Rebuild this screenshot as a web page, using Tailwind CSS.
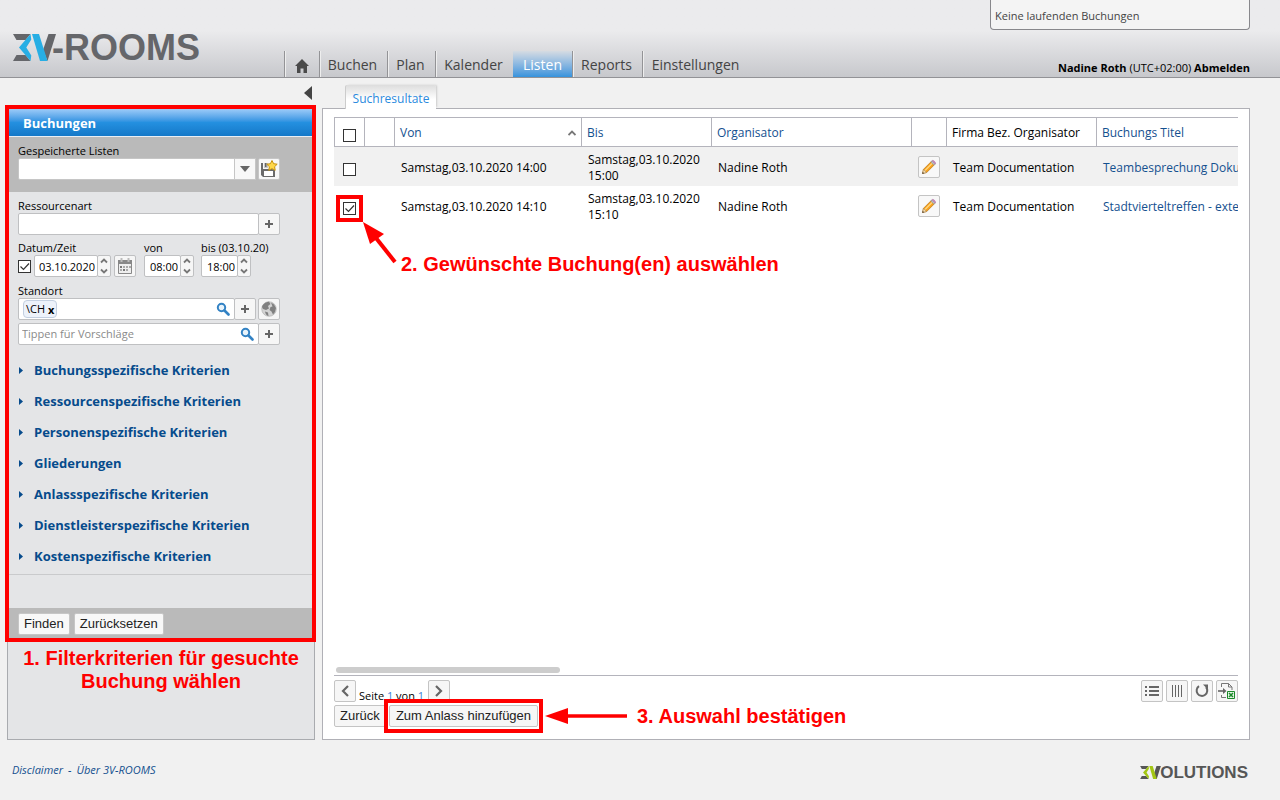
<!DOCTYPE html>
<html lang="de">
<head>
<meta charset="utf-8">
<meta name="viewport" content="width=device-width, initial-scale=1">
<title>3V-ROOMS – Listen</title>
<script src="https://cdn.jsdelivr.net/npm/@tailwindcss/browser@4"></script>
</head>
<body class="flex min-h-screen flex-col bg-[#f1f1f1] font-['Open_Sans','Noto_Sans',sans-serif] text-xs text-black">

<svg class="hidden" aria-hidden="true">
  <symbol id="plus" viewBox="0 0 10 10"><path d="M5 1v8M1 5h8" stroke="#666" stroke-width="2" fill="none"/></symbol>
  <symbol id="spin" viewBox="0 0 8 18"><path d="M1 5.500l3-3 3 3M1 12.500l3 3 3-3" stroke="#777" stroke-width="1.800" fill="none"/></symbol>
  <symbol id="search" viewBox="0 0 14 14"><circle cx="5.500" cy="5.500" r="3.700" fill="#e8f3fb" stroke="#3282c4" stroke-width="2"/><path d="M8.500 8.500l4 4" stroke="#3282c4" stroke-width="2.600" stroke-linecap="round"/></symbol>
  <symbol id="tick" viewBox="0 0 13 13"><path d="M2.500 6.500l3 3 5.500-6" stroke="#333" stroke-width="1.200" fill="none"/></symbol>
  <symbol id="pencil" viewBox="0 0 16 16">
    <path d="M1.500 14.500l1-4.200 8-8 3.200 3.200-8 8z" fill="#f9a11b" stroke="#b8741a" stroke-width=".7"/>
    <path d="M4 11.500l7.500-7.500" stroke="#ffd780" stroke-width="1.200"/>
    <path d="M1.500 14.500l1-4.200 3.200 3.200z" fill="#f3dcae" stroke="#a58250" stroke-width=".6"/>
    <path d="M1.300 14.700l.5-1.800 1.300 1.300z" fill="#333"/>
    <path d="M9.800 3l1.300-1.300 3.200 3.200L13 6.200z" fill="#b9bec6" stroke="#888" stroke-width=".5"/>
    <path d="M11.100 1.700c1-1.200 4.200 1.700 3.200 3.200z" fill="#d58fc4" stroke="#a868a0" stroke-width=".6"/>
  </symbol>
</svg>

<header class="flex h-[78px] items-end border-b border-[#929296] bg-linear-to-b from-[#ebebed] from-40% to-[#c7c8cc] pr-[30px]">
  <a href="#" class="mb-4 ml-[13px] flex w-[271px] shrink-0 items-center" aria-label="3V-ROOMS">
    <svg class="h-[27px] w-[43px]" viewBox="0 0 43 27" aria-hidden="true">
      <path d="M0 0h17.500l-5 6H3.500zM0 27h17.500l-5-6H3.500z" fill="#65666a"/>
      <path d="M35.500 0H43l-8.500 27-4.500-11z" fill="#65666a"/>
      <path d="M17.500 0l.8 5.500-5 8 5 8-.8 5.500L6 13.500z" fill="#27aee4"/>
      <path d="M19 0h7l8.500 27H27z" fill="#27aee4"/>
    </svg>
    <span class="-ml-1 font-['Liberation_Sans',sans-serif] text-[36px] leading-[27px] font-bold text-[#65666a]">-ROOMS</span>
  </a>
  <nav class="flex h-[26px] text-sm text-[#444]">
    <a href="#" aria-label="Startseite" class="flex w-[35px] items-center justify-center border-l border-[#939396] pt-1 shadow-[inset_1px_0_0_#eee]">
      <svg class="h-[14px] w-[14px]" viewBox="0 0 14 14"><path d="M7 0l7 7h-2v7H8.500V9.500h-3V14H2V7H0z" fill="#4a4a4a"/></svg>
    </a>
    <a href="#" class="flex w-[68px] items-center justify-center border-l border-[#939396] pt-[2px] pr-[2px] shadow-[inset_1px_0_0_#eee]">Buchen</a>
    <a href="#" class="flex w-12 items-center justify-center border-l border-[#939396] pt-[2px] pr-[2px] shadow-[inset_1px_0_0_#eee]">Plan</a>
    <a href="#" class="flex w-[78px] items-center justify-center border-l border-[#939396] pt-[2px] pr-[2px] shadow-[inset_1px_0_0_#eee]">Kalender</a>
    <a href="#" class="flex w-[59px] items-center justify-center bg-linear-to-b from-[#d5dbe2] to-[#3593dc] pt-[2px] text-white">Listen</a>
    <a href="#" class="flex w-[70px] items-center justify-center border-l border-[#939396] pt-[2px] pr-[2px] shadow-[inset_1px_0_0_#eee]">Reports</a>
    <a href="#" class="flex w-[106px] items-center justify-center border-l border-[#939396] pt-[2px] shadow-[inset_1px_0_0_#eee]">Einstellungen</a>
  </nav>
  <div class="ml-auto flex h-full w-[260px] flex-col justify-between">
    <div class="flex h-[30px] items-center rounded-b-sm border border-t-0 border-[#88888c] bg-[#f4f4f4] pt-[3px] pl-1 text-[11px] text-[#444]">Keine laufenden Buchungen</div>
    <div class="mb-px text-right text-[11px] leading-4 whitespace-nowrap"><b>Nadine Roth</b> (UTC+02:00) <a href="#" class="font-bold">Abmelden</a></div>
  </div>
</header>

<main class="flex flex-1 gap-[7px] pr-[30px] pl-[7px]">

  <aside class="flex w-[308px] shrink-0 flex-col">
    <div class="flex h-[30px] items-center justify-end pr-[3px]">
      <button aria-label="Einklappen"><svg class="h-[14px] w-2" viewBox="0 0 8 14"><path d="M8 0v14L0 7z" fill="#444"/></svg></button>
    </div>
    <div class="relative flex-1 border border-[#a9abaf] bg-[#e4e5e7]">
      <form>
        <h2 class="h-[28px] border-b border-[#e8eef5] bg-linear-to-b from-[#9ccbf8] via-[#2490e0] via-50% to-[#1478c8] pl-[15px] text-[13px] leading-[28px] font-bold text-white">Buchungen</h2>

        <div class="bg-[#bababa] px-[10px] pt-[6px] pb-3">
          <label for="lists" class="block text-[11px] leading-[15px]">Gespeicherte Listen</label>
          <div class="flex gap-[2px]">
            <div class="grid w-[238px]">
              <select id="lists" class="col-start-1 row-start-1 h-[22px] appearance-none rounded-xs border border-[#c6c6c6] bg-white px-1"><option></option></select>
              <span class="pointer-events-none col-start-1 row-start-1 flex h-[22px] w-[22px] items-center justify-center justify-self-end border border-[#c6c6c6] bg-[#f8f8f8]"><svg class="h-[6px] w-[10px]" viewBox="0 0 10 6"><path d="M0 0h10L5 6z" fill="#666"/></svg></span>
            </div>
            <button type="button" aria-label="Liste speichern" class="flex h-[22px] w-[22px] items-center justify-center rounded-xs border border-[#c6c6c6] bg-[#f8f8f8]">
              <svg class="h-[18px] w-[18px]" viewBox="0 0 18 18">
                <path d="M1 3h2v6h9l3 1v7H3l-2-2z" fill="#6b6b6b"/><path d="M4 3h4v5H4z" fill="#c8c8c8"/><path d="M5 3h1.500v4H5z" fill="#666"/><path d="M4 11h9v5H4z" fill="#fff"/>
                <path d="M12 .5l1.600 3.200 3.600.5-2.600 2.500.6 3.600L12 8.600l-3.200 1.700.6-3.600L6.800 4.200l3.600-.5z" fill="#ffd84a" stroke="#c8920c"/>
              </svg>
            </button>
          </div>
        </div>

        <div class="border-b border-[#c9cacc] px-[10px] pt-[6px] pb-[2px]">
          <label for="res" class="block text-[11px] leading-[15px]">Ressourcenart</label>
          <div class="flex">
            <input id="res" class="h-[22px] w-[241px] rounded-xs border border-[#bfc0c2] bg-white px-1">
            <button type="button" aria-label="Ressourcenart hinzufügen" class="-ml-px flex h-[22px] w-[22px] items-center justify-center rounded-xs border border-[#bfc0c2] bg-[#f6f6f6]"><svg class="h-[10px] w-[10px]"><use href="#plus"/></svg></button>
          </div>

          <div class="mt-[6px] flex items-end">
            <div class="w-[126px]">
              <label for="date" class="block text-[11px] leading-[14px]">Datum/Zeit</label>
              <div class="flex items-center gap-[3px]">
                <label class="grid h-[13px] w-[13px]"><input type="checkbox" checked aria-label="Datum verwenden" class="peer col-start-1 row-start-1 h-[13px] w-[13px] appearance-none border border-[#333] bg-white"><svg class="pointer-events-none invisible col-start-1 row-start-1 h-[13px] w-[13px] peer-checked:visible"><use href="#tick"/></svg></label>
                <div class="flex">
                  <input id="date" value="03.10.2020" class="h-[22px] w-16 rounded-xs border border-[#bfc0c2] bg-white pr-[2px] text-right text-[11px]">
                  <button type="button" aria-label="Datum ändern" class="-ml-px flex h-[22px] w-[14px] items-center justify-center rounded-xs border border-[#bfc0c2] bg-[#f6f6f6]"><svg class="h-[18px] w-2"><use href="#spin"/></svg></button>
                </div>
                <button type="button" aria-label="Kalender" class="flex h-[22px] w-[22px] items-center justify-center rounded-xs border border-[#bfc0c2] bg-[#f6f6f6]">
                  <svg class="h-4 w-4" viewBox="0 0 16 16"><path d="M1.500 2.500h13v13h-13z" fill="#eee" stroke="#888"/><path d="M1 2h14v4H1z" fill="#888"/><path d="M4.500 0v4M11.500 0v4" stroke="#bbb" stroke-width="2"/><path d="M6 8h2v2H6zM9 8h2v2H9zM12 8h2v2h-2zM3 11h2v2H3zM9 11h2v2H9z" fill="#aaa"/><path d="M3 8h2v2H3zM6 11h2v2H6z" fill="#777"/></svg>
                </button>
              </div>
            </div>
            <div class="w-[57px]">
              <label for="from" class="block text-[11px] leading-[14px]">von</label>
              <div class="flex">
                <input id="from" value="08:00" class="h-[22px] w-[37px] rounded-xs border border-[#bfc0c2] bg-white pr-[2px] text-right text-[11px]">
                <button type="button" aria-label="Beginn ändern" class="-ml-px flex h-[22px] w-[14px] items-center justify-center rounded-xs border border-[#bfc0c2] bg-[#f6f6f6]"><svg class="h-[18px] w-2"><use href="#spin"/></svg></button>
              </div>
            </div>
            <div>
              <label for="to" class="block text-[11px] leading-[14px]">bis (03.10.20)</label>
              <div class="flex">
                <input id="to" value="18:00" class="h-[22px] w-[37px] rounded-xs border border-[#bfc0c2] bg-white pr-[2px] text-right text-[11px]">
                <button type="button" aria-label="Ende ändern" class="-ml-px flex h-[22px] w-[14px] items-center justify-center rounded-xs border border-[#bfc0c2] bg-[#f6f6f6]"><svg class="h-[18px] w-2"><use href="#spin"/></svg></button>
              </div>
            </div>
          </div>

          <label for="loc" class="mt-[6px] block text-[11px] leading-[15px]">Standort</label>
          <div class="flex">
            <div class="flex h-[22px] w-[217px] items-center rounded-xs border border-[#bfc0c2] bg-white pr-1 pl-1">
              <span class="flex h-[18px] items-center gap-[3px] rounded-[4px] border border-[#c3cfe0] bg-[#edf2fa] px-[2px] text-[11px]">\CH <button type="button" aria-label="\CH entfernen" class="leading-none font-bold">x</button></span>
              <input id="loc" class="min-w-0 flex-1 bg-transparent px-1">
              <svg class="h-[14px] w-[14px] shrink-0"><use href="#search"/></svg>
            </div>
            <button type="button" aria-label="Standort hinzufügen" class="-ml-px flex h-[22px] w-[22px] items-center justify-center rounded-xs border border-[#bfc0c2] bg-[#f6f6f6]"><svg class="h-[10px] w-[10px]"><use href="#plus"/></svg></button>
            <button type="button" aria-label="Karte" class="ml-[2px] flex h-[22px] w-[22px] items-center justify-center rounded-xs border border-[#bfc0c2] bg-[#f6f6f6]">
              <svg class="h-4 w-4" viewBox="0 0 16 16"><circle cx="8" cy="8" r="7.300" fill="#d3d3d3" stroke="#aaa" stroke-width=".6"/><path d="M1 6C2 3 5 .8 8 .8L9.500 3 7 5l1 2.500-3 1.500-3-1zM10 1.500l3 2L15 7l-1 4-2 2.500-1.500-3L8.500 9l1-3 2-.5zM4 10.500l3 1 .5 3.500C5.500 14.500 4.500 13 4 10.500z" fill="#808080"/></svg>
            </button>
          </div>
          <div class="mt-[3px] flex">
            <div class="flex h-[22px] w-[241px] items-center rounded-xs border border-[#bfc0c2] bg-white pr-1 pl-[3px]">
              <input aria-label="Vorschläge" placeholder="Tippen für Vorschläge" class="min-w-0 flex-1 bg-transparent text-[11px] placeholder:text-[#8a8a8a]">
              <svg class="h-[14px] w-[14px] shrink-0"><use href="#search"/></svg>
            </div>
            <button type="button" aria-label="Vorschlag hinzufügen" class="-ml-px flex h-[22px] w-[22px] items-center justify-center rounded-xs border border-[#bfc0c2] bg-[#f6f6f6]"><svg class="h-[10px] w-[10px]"><use href="#plus"/></svg></button>
          </div>

          <ul class="mt-[10px] text-[13px] font-bold text-[#064b8c]">
            <li><button type="button" class="flex h-[31px] items-center gap-[11px] pl-px"><svg class="h-[7px] w-1" viewBox="0 0 4 7"><path d="M0 0l4 3.500L0 7z" fill="#064b8c"/></svg>Buchungsspezifische Kriterien</button></li>
            <li><button type="button" class="flex h-[31px] items-center gap-[11px] pl-px"><svg class="h-[7px] w-1" viewBox="0 0 4 7"><path d="M0 0l4 3.500L0 7z" fill="#064b8c"/></svg>Ressourcenspezifische Kriterien</button></li>
            <li><button type="button" class="flex h-[31px] items-center gap-[11px] pl-px"><svg class="h-[7px] w-1" viewBox="0 0 4 7"><path d="M0 0l4 3.500L0 7z" fill="#064b8c"/></svg>Personenspezifische Kriterien</button></li>
            <li><button type="button" class="flex h-[31px] items-center gap-[11px] pl-px"><svg class="h-[7px] w-1" viewBox="0 0 4 7"><path d="M0 0l4 3.500L0 7z" fill="#064b8c"/></svg>Gliederungen</button></li>
            <li><button type="button" class="flex h-[31px] items-center gap-[11px] pl-px"><svg class="h-[7px] w-1" viewBox="0 0 4 7"><path d="M0 0l4 3.500L0 7z" fill="#064b8c"/></svg>Anlassspezifische Kriterien</button></li>
            <li><button type="button" class="flex h-[31px] items-center gap-[11px] pl-px"><svg class="h-[7px] w-1" viewBox="0 0 4 7"><path d="M0 0l4 3.500L0 7z" fill="#064b8c"/></svg>Dienstleisterspezifische Kriterien</button></li>
            <li><button type="button" class="flex h-[31px] items-center gap-[11px] pl-px"><svg class="h-[7px] w-1" viewBox="0 0 4 7"><path d="M0 0l4 3.500L0 7z" fill="#064b8c"/></svg>Kostenspezifische Kriterien</button></li>
          </ul>
        </div>

        <div class="mt-[33px] flex gap-1 bg-[#bababa] px-[10px] py-[5px] font-['Liberation_Sans',sans-serif] text-[13px] text-[#222]">
          <button type="submit" class="h-[22px] rounded-xs border border-[#c6c6c6] bg-[#f8f8f8] px-[5px]">Finden</button>
          <button type="reset" class="h-[22px] rounded-xs border border-[#c6c6c6] bg-[#f8f8f8] px-[5px]">Zurücksetzen</button>
        </div>
        <div class="pointer-events-none absolute -top-1 -right-[2px] -left-[3px] h-[537px] border-4 border-[#f00]"></div>
      </form>
      <p class="pt-[7px] text-center font-['Liberation_Sans',sans-serif] text-xl leading-[23px] font-bold text-[#f00]">1. Filterkriterien für gesuchte<br>Buchung wählen</p>
    </div>
  </aside>

  <section class="flex min-w-0 flex-1 flex-col">
    <div class="flex h-[30px] items-end pl-[23px]">
      <a href="#" class="relative -mb-px flex h-6 w-[91px] items-center justify-center rounded-t-xs border-l border-[#ccc] bg-linear-to-b from-[#ddd] to-white to-60% pt-[3px] text-xs text-[#2a8ade] shadow-[2px_-1px_2px_-1px_#ccc]">Suchresultate</a>
    </div>
    <div class="flex flex-1 flex-col border border-[#b0b0b6] bg-white px-[11px] pt-2 pb-3">
      <div class="relative flex-1 overflow-hidden">
        <table class="w-full table-fixed border-separate border-spacing-0 text-left text-xs whitespace-nowrap">
          <colgroup><col class="w-[30px]"><col class="w-[30px]"><col class="w-[187px]"><col class="w-[130px]"><col class="w-[200px]"><col class="w-[35px]"><col class="w-[150px]"><col></colgroup>
          <thead>
            <tr class="h-[30px] text-[#14508f]">
              <th class="border border-r-0 border-[#b4b4bc] p-0 pt-[6px] pl-2"><input type="checkbox" aria-label="Alle auswählen" class="block h-[13px] w-[13px] appearance-none border border-[#333] bg-white"></th>
              <th class="border-y border-l border-[#b4b4bc]"></th>
              <th class="border-y border-l border-[#b4b4bc] p-0 px-[5px] pt-[2px] font-normal"><a href="#" class="flex items-center justify-between">Von <svg class="h-[6px] w-2" viewBox="0 0 8 6"><path d="M.5 5l3.500-3.500L7.500 5" stroke="#777" stroke-width="1.800" fill="none"/></svg></a></th>
              <th class="border-y border-l border-[#b4b4bc] p-0 pt-[2px] pl-[5px] font-normal"><a href="#">Bis</a></th>
              <th class="border-y border-l border-[#b4b4bc] p-0 pt-[2px] pl-[5px] font-normal"><a href="#">Organisator</a></th>
              <th class="border-y border-l border-[#b4b4bc]"></th>
              <th class="border-y border-l border-[#b4b4bc] p-0 pt-[2px] pl-[5px] font-normal text-black">Firma Bez. Organisator</th>
              <th class="border-y border-l border-[#b4b4bc] p-0 pt-[2px] pl-[5px] font-normal"><a href="#">Buchungs Titel</a></th>
            </tr>
          </thead>
          <tbody>
            <tr class="h-[39px] bg-[#f1f1f1]">
              <td class="p-0 pt-[5px] pl-[9px]"><input type="checkbox" aria-label="Buchung 14:00 auswählen" class="block h-[13px] w-[13px] appearance-none border border-[#333] bg-white"></td>
              <td></td>
              <td class="p-0 pt-[2px] pl-[7px]">Samstag,03.10.2020 14:00</td>
              <td class="p-0 pt-[2px] pl-[7px] leading-4">Samstag,03.10.2020<br>15:00</td>
              <td class="p-0 pt-[2px] pl-[7px]">Nadine Roth</td>
              <td class="p-0 pl-[7px]"><button aria-label="Bearbeiten" class="flex h-[22px] w-[22px] items-center justify-center rounded-xs border border-[#c4c4c4] bg-[#f8f8f8]"><svg class="h-4 w-4"><use href="#pencil"/></svg></button></td>
              <td class="p-0 pt-[2px] pl-[7px]">Team Documentation</td>
              <td class="overflow-hidden p-0 pt-[2px] pl-[7px]"><a href="#" class="text-[#14508f]">Teambesprechung Dokumentation</a></td>
            </tr>
            <tr class="h-[39px]">
              <td class="p-0 pt-[5px] pl-[9px]">
                <label class="relative grid h-[13px] w-[13px]"><input type="checkbox" checked aria-label="Buchung 14:10 auswählen" class="peer col-start-1 row-start-1 h-[13px] w-[13px] appearance-none border border-[#333] bg-white"><svg class="pointer-events-none invisible col-start-1 row-start-1 h-[13px] w-[13px] peer-checked:visible"><use href="#tick"/></svg>
                <span class="pointer-events-none absolute -inset-[7px] border-4 border-[#f00]"></span></label>
              </td>
              <td></td>
              <td class="p-0 pt-[2px] pl-[7px]">Samstag,03.10.2020 14:10</td>
              <td class="p-0 pt-[2px] pl-[7px] leading-4">Samstag,03.10.2020<br>15:10</td>
              <td class="p-0 pt-[2px] pl-[7px]">Nadine Roth</td>
              <td class="p-0 pl-[7px]"><button aria-label="Bearbeiten" class="flex h-[22px] w-[22px] items-center justify-center rounded-xs border border-[#c4c4c4] bg-[#f8f8f8]"><svg class="h-4 w-4"><use href="#pencil"/></svg></button></td>
              <td class="p-0 pt-[2px] pl-[7px]">Team Documentation</td>
              <td class="overflow-hidden p-0 pt-[2px] pl-[7px]"><a href="#" class="text-[#14508f]">Stadtvierteltreffen - extern</a></td>
            </tr>
          </tbody>
        </table>
        <div class="pointer-events-none absolute top-[104px] left-7 flex items-end">
          <svg class="h-[44px] w-[36px]" viewBox="0 0 36 44"><path d="M1 1l21 12-14 10z" fill="#f00"/><path d="M14 17l19 24" stroke="#f00" stroke-width="4"/></svg>
          <p class="-mb-[11px] ml-[3px] font-['Liberation_Sans',sans-serif] text-xl leading-[23px] font-bold text-[#f00]">2. Gewünschte Buchung(en) auswählen</p>
        </div>
      </div>

      <div class="pb-[2px] pl-[2px]"><div class="h-[6px] w-56 rounded-full bg-[#cdcdcd]"></div></div>
      <div class="flex border-t border-[#b4b4bc] pt-1">
        <button aria-label="Vorherige Seite" class="flex h-[22px] w-[22px] items-center justify-center rounded-xs border border-[#c4c4c4] bg-[#f6f6f6]"><svg class="h-3 w-2" viewBox="0 0 8 12"><path d="M7 1L2 6l5 5" stroke="#666" stroke-width="2.200" fill="none"/></svg></button>
        <span class="mt-2 -mb-[2px] pr-1 pl-[3px] text-[11px] leading-4">Seite <a href="#" class="text-[#3b82d8]">1</a> von <a href="#" class="text-[#3b82d8]">1</a></span>
        <button aria-label="Nächste Seite" class="flex h-[22px] w-[22px] items-center justify-center rounded-xs border border-[#c4c4c4] bg-[#f6f6f6]"><svg class="h-3 w-2" viewBox="0 0 8 12"><path d="M1 1l5 5-5 5" stroke="#666" stroke-width="2.200" fill="none"/></svg></button>
        <div class="ml-auto flex gap-[3px]">
          <button aria-label="Liste" class="flex h-[22px] w-[22px] items-center justify-center rounded-xs border border-[#c4c4c4] bg-[#f6f6f6]"><svg class="h-[10px] w-[14px]" viewBox="0 0 14 10"><path d="M0 1h2M0 5h2M0 9h2M4 1h10M4 5h10M4 9h10" stroke="#666" stroke-width="2"/></svg></button>
          <button aria-label="Spalten" class="flex h-[22px] w-[22px] items-center justify-center rounded-xs border border-[#c4c4c4] bg-[#f6f6f6]"><svg class="h-3 w-[10px]" viewBox="0 0 10 12"><path d="M.5 0v12M3.500 0v12M6.500 0v12M9.500 0v12" stroke="#666"/></svg></button>
          <button aria-label="Aktualisieren" class="flex h-[22px] w-[22px] items-center justify-center rounded-xs border border-[#c4c4c4] bg-[#f6f6f6]"><svg class="h-[14px] w-[14px]" viewBox="0 0 14 14"><path d="M4 2.200A5.300 5.300 0 1 0 11 3.200" stroke="#666" stroke-width="2" fill="none"/><path d="M8 .5h5v5z" fill="#666"/></svg></button>
          <button aria-label="Excel-Export" class="flex h-[22px] w-[22px] items-center justify-center rounded-xs border border-[#c4c4c4] bg-[#f6f6f6]"><svg class="h-4 w-[18px]" viewBox="0 0 18 16"><path d="M3.500 4V.5h7L14 4v3M3.500 12v2.500H8" stroke="#777" fill="none"/><path d="M10.500.5V4H14" stroke="#777" fill="none"/><path d="M0 8h7" stroke="#666" stroke-width="1.600"/><path d="M5 5l3.500 3L5 11z" fill="#666"/><path d="M9.500 8.500h7v7h-7z" fill="#e8f6e8" stroke="#1b8a2a"/><path d="M11 10l4 4M15 10l-4 4" stroke="#1b8a2a" stroke-width="1.500"/></svg></button>
        </div>
      </div>
      <div class="mt-[3px] flex items-center font-['Liberation_Sans',sans-serif] text-[13px] text-[#222]">
        <button class="h-[22px] w-[53px] rounded-xs border border-[#c4c4c4] bg-[#f6f6f6] pl-[5px] text-left">Zurück</button>
        <div class="relative ml-[2px]">
          <button class="block h-[22px] w-[149px] rounded-xs border border-[#c4c4c4] bg-[#f6f6f6]">Zum Anlass hinzufügen</button>
          <span class="pointer-events-none absolute -inset-x-[5px] -inset-y-[6px] border-4 border-[#f00]"></span>
        </div>
        <svg class="ml-[7px] h-4 w-[82px]" viewBox="0 0 82 16"><path d="M0 8L23 0v16z" fill="#f00"/><path d="M22 8h60" stroke="#f00" stroke-width="3.500"/></svg>
        <p class="ml-[10px] text-xl leading-[22px] font-bold text-[#f00]">3. Auswahl bestätigen</p>
      </div>
    </div>
  </section>
</main>

<footer class="flex h-[60px] items-center justify-between pr-8 pl-3 text-[11px] text-[#14508f] italic">
  <div class="flex gap-[5px]"><a href="#">Disclaimer</a><span>-</span><a href="#">Über 3V-ROOMS</a></div>
  <a href="#" class="mt-1 flex items-center not-italic" aria-label="3VOLUTIONS">
    <svg class="h-[13px] w-[21px]" viewBox="0 0 43 27" aria-hidden="true">
      <path d="M0 0h17.500l-5 6H3.500zM0 27h17.500l-5-6H3.500z" fill="#565656"/>
      <path d="M34 0h9l-8.500 27H31l-3-9z" fill="#565656"/>
      <path d="M17.500 0l.8 5.500-5 8 5 8-.8 5.500L6 13.500z" fill="#a3c614"/>
      <path d="M19 0h7l8.500 27H27z" fill="#a3c614"/>
    </svg>
    <span class="-ml-px font-['Liberation_Sans',sans-serif] text-[17px] leading-[13px] font-bold text-[#565656]">OLUTIONS</span>
  </a>
</footer>
</body>
</html>
